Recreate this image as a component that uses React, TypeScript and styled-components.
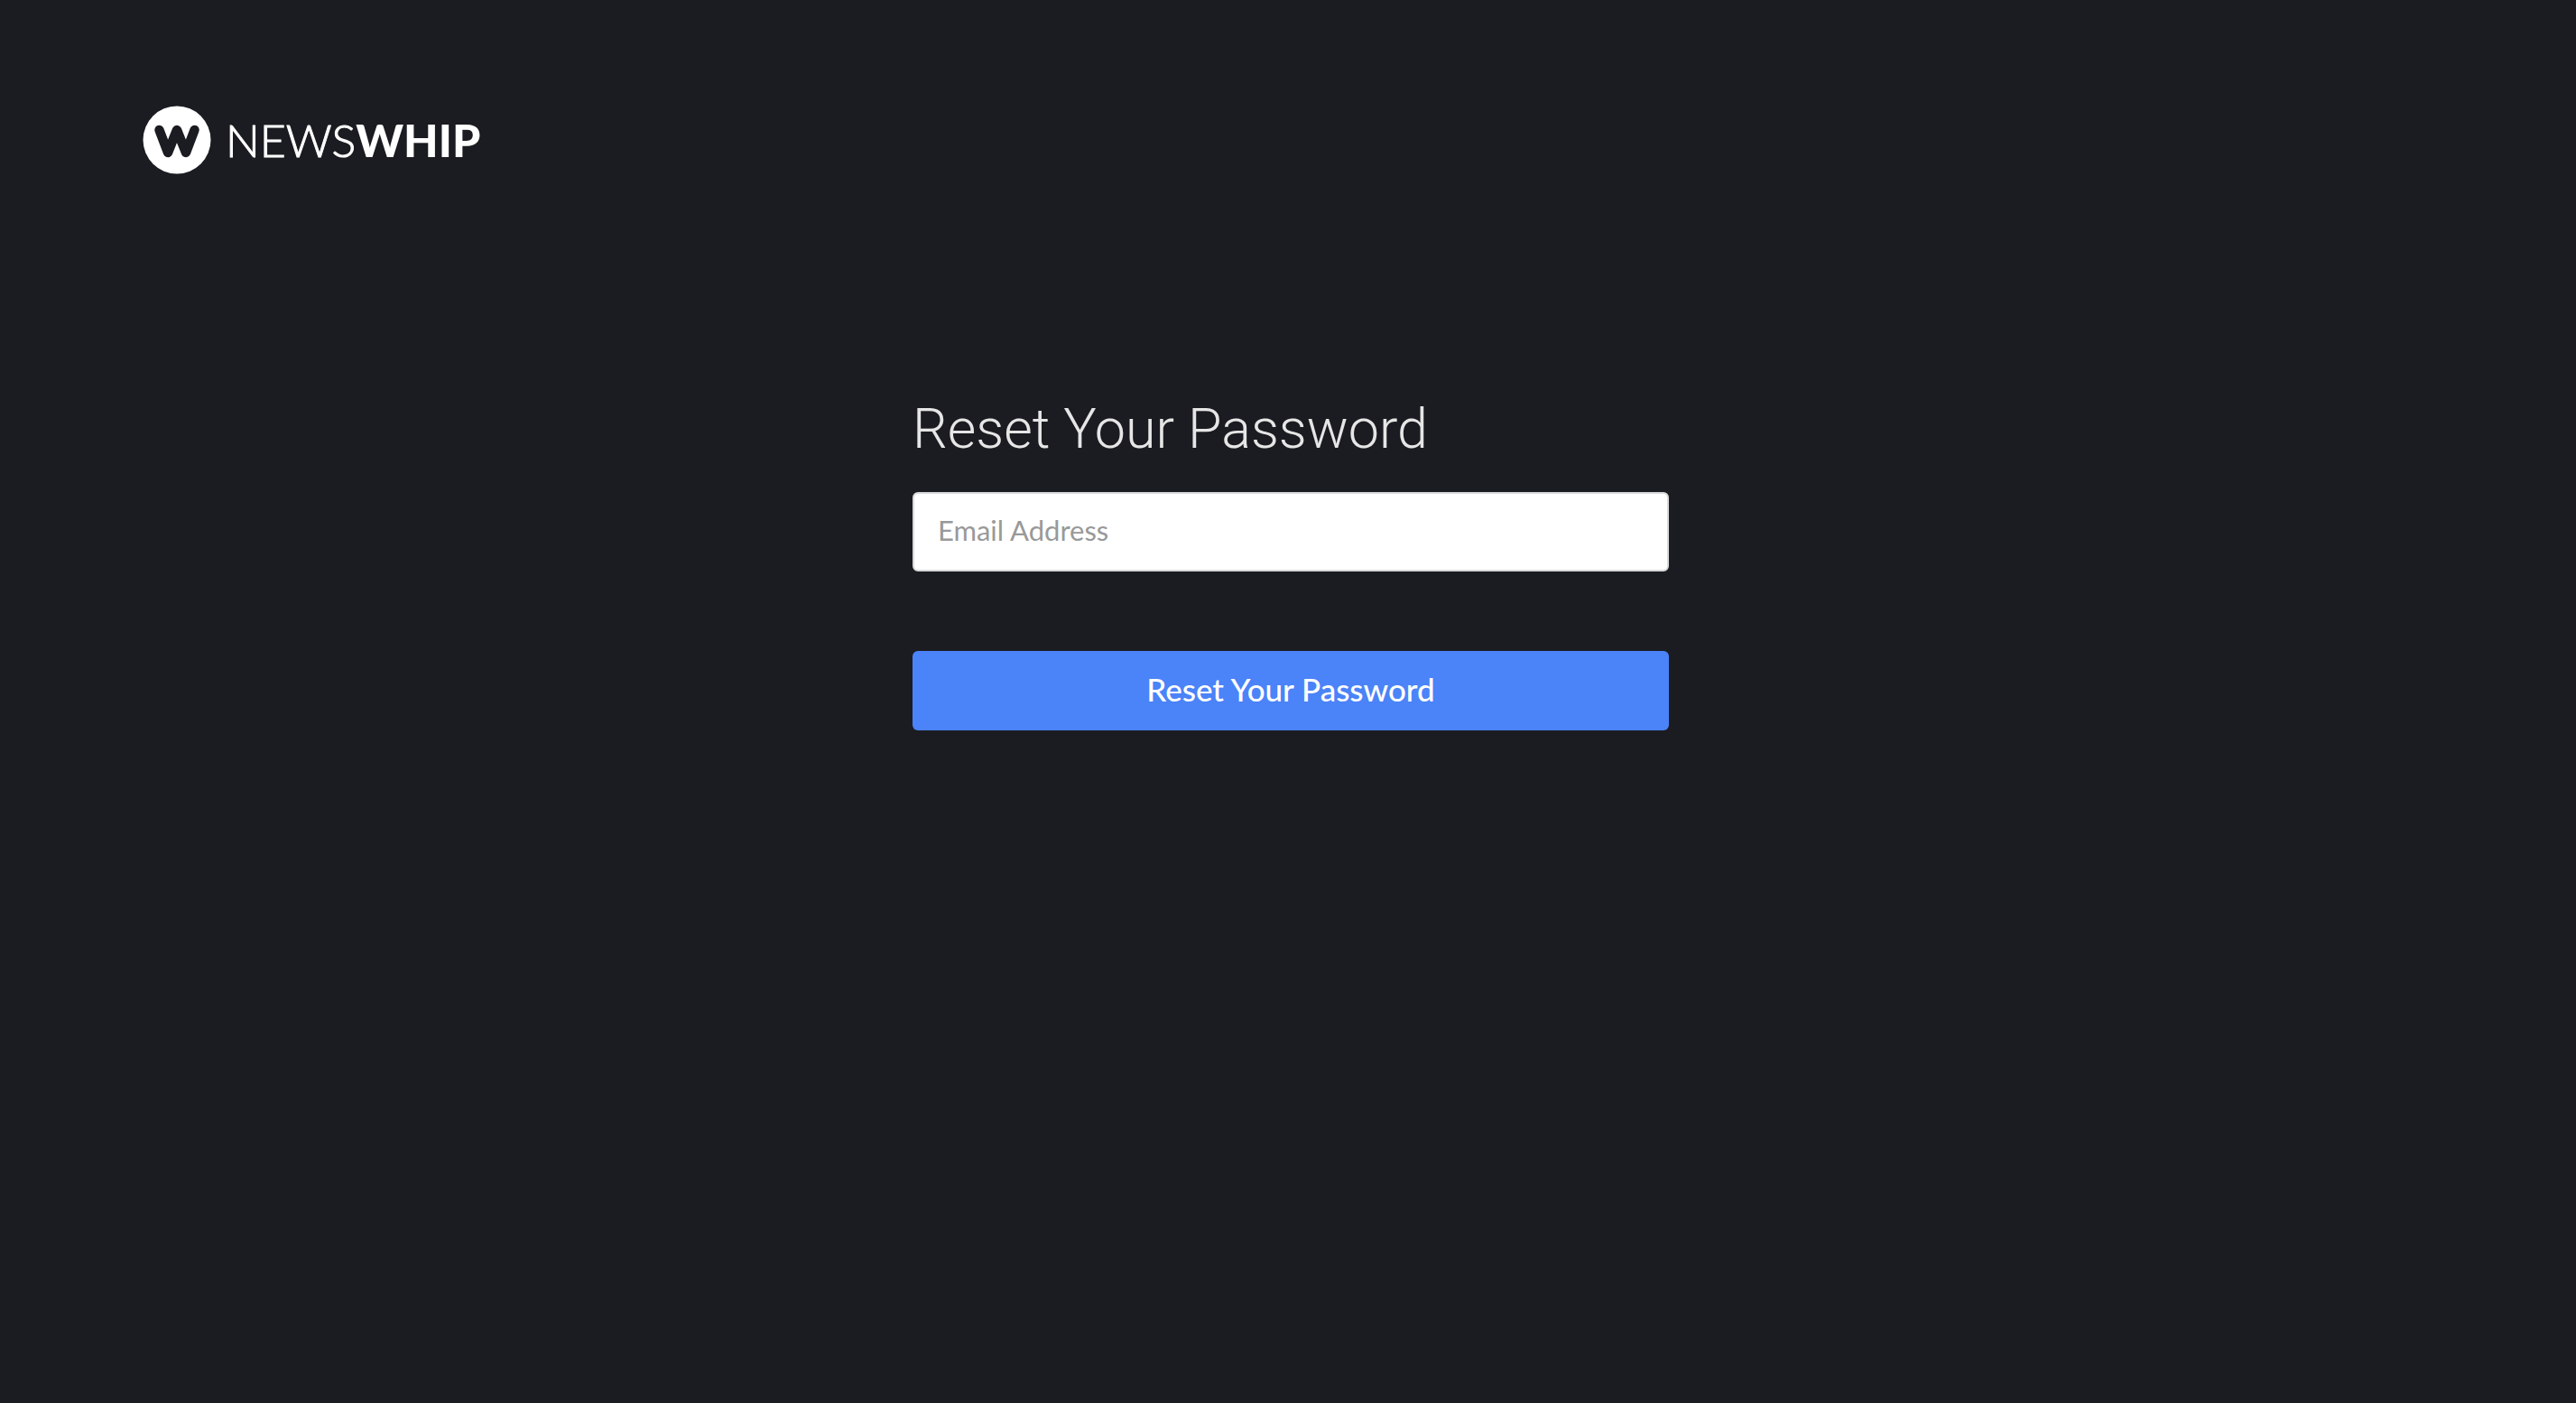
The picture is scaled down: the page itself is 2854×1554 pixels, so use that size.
import React, { useState } from 'react';
import styled, { createGlobalStyle } from 'styled-components';

const GlobalStyle = createGlobalStyle`
  *, *::before, *::after {
    box-sizing: border-box;
  }

  body {
    margin: 0;
    background: #1b1c21;
    color: #e6e6e6;
    font-family: Lato, 'Open Sans', sans-serif;
  }
`;

const Page = styled.div`
  display: flex;
  flex-direction: column;
  min-height: 100vh;
  padding: 117px 152px 64px 158px;
`;

const Header = styled.header`
  display: flex;
`;

const LogoLink = styled.a`
  display: flex;
  align-items: center;
  gap: 16px;
  color: #ffffff;
  text-decoration: none;
`;

const LogoMark = styled.svg`
  flex: none;
  width: 76px;
  height: 76px;
`;

const Wordmark = styled.span`
  font-size: 50px;
  line-height: 76px;
`;

const LightPart = styled.span`
  font-weight: 300;
  -webkit-text-stroke: 1px #ffffff;
`;

const HeavyPart = styled.span`
  font-weight: 900;
`;

const Main = styled.main`
  display: flex;
  justify-content: center;
  padding-top: 240px;
`;

const ResetForm = styled.form`
  display: flex;
  flex-direction: column;
  width: 100%;
  max-width: 838px;
`;

const Title = styled.h1`
  margin: 0 0 28px;
  font-family: Roboto, Lato, sans-serif;
  font-size: 61px;
  font-weight: 300;
  line-height: 84px;
`;

const EmailInput = styled.input`
  width: 100%;
  height: 88px;
  margin-bottom: 88px;
  padding: 0 26px 4px;
  border: 2px solid #d8d9da;
  border-radius: 6px;
  background: #ffffff;
  color: #333333;
  font-family: inherit;
  font-size: 31px;

  &::placeholder {
    color: #999999;
    opacity: 1;
  }
`;

const SubmitButton = styled.button`
  width: 100%;
  height: 88px;
  padding: 0 24px 4px;
  border: 0;
  border-radius: 6px;
  background: #4b83f8;
  color: #ffffff;
  font-family: inherit;
  font-size: 35px;
  font-weight: 500;
  cursor: pointer;
`;

function Logo() {
  return (
    <LogoLink href="#" aria-label="NewsWhip">
      <LogoMark viewBox="0 0 76 76" aria-hidden="true">
        <circle cx="38" cy="38" r="37.5" fill="#ffffff" />
        <path
          d="M18.5 27 L28 52 L38 27 L48 52 L57.5 27"
          fill="none"
          stroke="#1b1c21"
          strokeWidth="10.5"
          strokeLinecap="round"
          strokeLinejoin="round"
        />
      </LogoMark>
      <Wordmark>
        <LightPart>NEWS</LightPart>
        <HeavyPart>WHIP</HeavyPart>
      </Wordmark>
    </LogoLink>
  );
}

export default function App() {
  const [email, setEmail] = useState('');

  return (
    <>
      <GlobalStyle />
      <Page>
        <Header>
          <Logo />
        </Header>
        <Main>
          <ResetForm onSubmit={(event) => event.preventDefault()}>
            <Title>Reset Your Password</Title>
            <EmailInput
              id="email"
              type="email"
              aria-label="Email Address"
              placeholder="Email Address"
              value={email}
              onChange={(event) => setEmail(event.target.value)}
            />
            <SubmitButton type="submit">Reset Your Password</SubmitButton>
          </ResetForm>
        </Main>
      </Page>
    </>
  );
}
